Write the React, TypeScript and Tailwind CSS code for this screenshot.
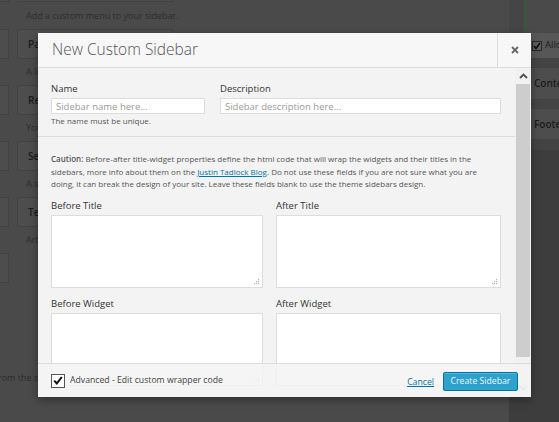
import React from "react";

const WIDGETS = [
  { title: "Pages", desc: "A list of your site's Pages." },
  { title: "Recent Comments", desc: "Your site's most recent comments." },
  { title: "Search", desc: "A search form for your site." },
  { title: "Text", desc: "Arbitrary text or HTML." },
];

function Grip() {
  const dots = [
    [5, 1],
    [3, 3],
    [5, 3],
    [1, 5],
    [3, 5],
    [5, 5],
  ];
  return (
    <svg width="7" height="7" viewBox="0 0 7 7" className="absolute right-[2px] bottom-[2px]">
      {dots.map(([x, y], i) => (
        <rect key={i} x={x} y={y} width="1.2" height="1.2" fill="#b4b4b4" />
      ))}
    </svg>
  );
}

function Field({ label, w }: { label: string; w: string }) {
  return (
    <div className={w}>
      <div className="text-[9.5px] leading-[13px] text-[#333] mb-[3px]">{label}</div>
      <div className="relative h-[73px] bg-white border border-[#dddddd]">
        <Grip />
      </div>
    </div>
  );
}

function Scrollbar() {
  return (
    <div className="w-[16px] shrink-0 flex flex-col bg-[#f1f1f1]">
      <div className="h-[16px] flex items-center justify-center">
        <svg width="9" height="6" viewBox="0 0 9 6">
          <path d="M1 5 L4.5 1.5 L8 5" stroke="#505050" strokeWidth="1.8" fill="none" />
        </svg>
      </div>
      <div className="h-[273px] mx-[1px] bg-[#cdcdcd]" />
      <div className="flex-1 flex items-end justify-center pb-[6px]">
        <svg width="9" height="6" viewBox="0 0 9 6">
          <path d="M1 1 L4.5 4.5 L8 1" stroke="#a3a3a3" strokeWidth="1.6" fill="none" />
        </svg>
      </div>
    </div>
  );
}

function Background() {
  return (
    <div className="flex h-full">
      <div className="w-[509px] shrink-0 flex flex-col">
        {/* first partial widget row */}
        <div className="flex gap-[8px] -mt-[28px]">
          <div className="w-[9px] h-[30px] bg-[#4d4d4d] border-y border-r border-[#424242]" />
          <div className="w-[156px] h-[30px] bg-[#4d4d4d] border border-[#424242]" />
        </div>
        <div className="pl-[26px] pt-[7px] pb-[7px] text-[9px] leading-[13px] text-[#2c2c2c]">
          Add a custom menu to your sidebar.
        </div>
        {WIDGETS.map((w) => (
          <div key={w.title}>
            <div className="flex gap-[8px]">
              <div className="w-[9px] h-[30px] bg-[#4d4d4d] border-y border-r border-[#424242]" />
              <div className="w-[156px] h-[30px] bg-[#4d4d4d] border border-[#424242] pl-[10px] flex items-center text-[10px] font-semibold text-[#1c1c1c]">
                {w.title}
              </div>
            </div>
            <div className="pl-[26px] pt-[6px] pb-[7px] text-[9px] leading-[13px] text-[#2c2c2c]">
              {w.desc}
            </div>
          </div>
        ))}
        <div className="w-[9px] h-[30px] bg-[#4d4d4d] border-y border-r border-[#424242]" />
        <div className="mt-[88px] -ml-[5px] text-[9px] leading-[13px] text-[#2c2c2c] whitespace-nowrap">
          from the sidebar to delete them and their settings.
        </div>
      </div>
      <div className="flex-1 min-w-0 overflow-hidden flex flex-col">
        <div className="h-[33px] flex shrink-0">
          <div className="w-[15px] bg-[#454545]" />
          <div className="w-[1px] bg-[#1f6b2a]" />
          <div className="flex-1 bg-[#4a4a4a]" />
        </div>
        <div className="h-[25px] bg-[#575757] pl-[23px] flex items-center gap-[3px] whitespace-nowrap">
          <div className="w-[10px] h-[10px] shrink-0 border border-[#2a2a2a] bg-[#5e5e5e] flex items-center justify-center">
            <svg width="8" height="8" viewBox="0 0 8 8">
              <path d="M1 4 L3 6.5 L7 1" stroke="#111" strokeWidth="1.6" fill="none" />
            </svg>
          </div>
          <span className="text-[9.5px] text-[#1c1c1c]">Allow</span>
        </div>
        <div className="h-[9px] bg-[#444444]" />
        <div className="h-[33px] bg-[#4d4d4d] border-y border-[#424242] pl-[25px] flex items-center text-[10px] font-semibold text-[#1c1c1c] whitespace-nowrap">
          Content
        </div>
        <div className="h-[8px] bg-[#444444]" />
        <div className="h-[32px] bg-[#4d4d4d] border-y border-[#424242] pl-[25px] flex items-center text-[10px] font-semibold text-[#1c1c1c] whitespace-nowrap">
          Footer
        </div>
        <div className="h-[10px] bg-[#434343]" />
        <div className="flex-1 bg-[#3d3d3d]" />
      </div>
    </div>
  );
}

export default function App() {
  return (
    <div className="relative w-[559px] h-[422px] overflow-hidden bg-[#4a4a4a] font-['Open_Sans','Noto_Sans',sans-serif]">
      <Background />

      <div className="absolute left-[38px] top-[33px] w-[493px] h-[364px] bg-[#f3f3f3] shadow-[0_3px_8px_rgba(0,0,0,0.35)] flex flex-col overflow-hidden">
        <div className="h-[35px] shrink-0 flex bg-[#f7f7f7] border-b border-[#dddddd]">
          <h1 className="flex-1 pl-[14px] flex items-center text-[15.5px] font-light text-[#555]">
            New Custom Sidebar
          </h1>
          <button className="w-[34px] border-l border-[#dddddd] flex items-center justify-center text-[#666]">
            <svg width="8" height="8" viewBox="0 0 8 8">
              <path d="M1 1 L7 7 M7 1 L1 7" stroke="#666" strokeWidth="1.8" />
            </svg>
          </button>
        </div>

        <div className="relative flex-1 flex min-h-0">
          <div className="flex-1 overflow-hidden">
            <div className="px-[13px] pt-[14px] pb-[10px] border-b border-[#dddddd] flex gap-[15px]">
              <div className="w-[154px]">
                <div className="text-[9.5px] leading-[13px] text-[#333] mb-[3px]">Name</div>
                <input
                  placeholder="Sidebar name here..."
                  className="block w-full h-[16px] bg-white border border-[#dddddd] px-[4px] text-[9.5px] text-[#333] placeholder:text-[#9a9a9a] outline-none"
                />
                <div className="mt-[1px] text-[8px] leading-[11px] text-[#555]">The name must be unique.</div>
              </div>
              <div className="w-[281px]">
                <div className="text-[9.5px] leading-[13px] text-[#333] mb-[3px]">Description</div>
                <input
                  placeholder="Sidebar description here..."
                  className="block w-full h-[16px] bg-white border border-[#dddddd] px-[4px] text-[9.5px] text-[#333] placeholder:text-[#9a9a9a] outline-none"
                />
              </div>
            </div>

            <div className="px-[13px] pt-[16px]">
              <p className="text-[8px] leading-[12.5px] text-[#555] pr-[10px]">
                <span className="font-semibold">Caution:</span> Before-after title-widget properties define the html code
                that will wrap the widgets and their titles in the sidebars, more info about them on the{" "}
                <a className="text-[#0074a2] underline">Justin Tadlock Blog</a>. Do not use these fields if you are not
                sure what you are doing, it can break the design of your site. Leave these fields blank to use the theme
                sidebars design.
              </p>
              <div className="mt-[8px] grid grid-cols-[212px_225px] gap-x-[13px] gap-y-[9px]">
                <Field label="Before Title" w="w-[212px]" />
                <Field label="After Title" w="w-[225px]" />
                <Field label="Before Widget" w="w-[212px]" />
                <Field label="After Widget" w="w-[225px]" />
              </div>
            </div>
          </div>
          <Scrollbar />

          <div className="absolute left-0 right-0 bottom-0 h-[34px] bg-[#f3f3f3]/85 border-t border-[#dcdcdc] px-[13px] flex items-center">
            <div className="w-[14px] h-[14px] shrink-0 bg-white border border-[#555] flex items-center justify-center">
              <svg width="10" height="9" viewBox="0 0 10 9">
                <path d="M1.2 4.6 L3.8 7.4 L8.8 1" stroke="#111" strokeWidth="2" fill="none" />
              </svg>
            </div>
            <span className="ml-[5px] text-[8.7px] text-[#444] whitespace-nowrap">Advanced - Edit custom wrapper code</span>
            <a className="ml-auto mt-[4px] text-[8.7px] text-[#0074a2] underline">Cancel</a>
            <button className="ml-[9px] mt-[2px] h-[19px] w-[75px] shrink-0 bg-[#2ea2cc] border border-[#0074a2] rounded-[2px] text-[8.7px] text-[#eaf6fb] whitespace-nowrap shadow-[inset_0_1px_0_rgba(120,200,230,0.5)]">
              Create Sidebar
            </button>
          </div>
        </div>
      </div>
    </div>
  );
}
